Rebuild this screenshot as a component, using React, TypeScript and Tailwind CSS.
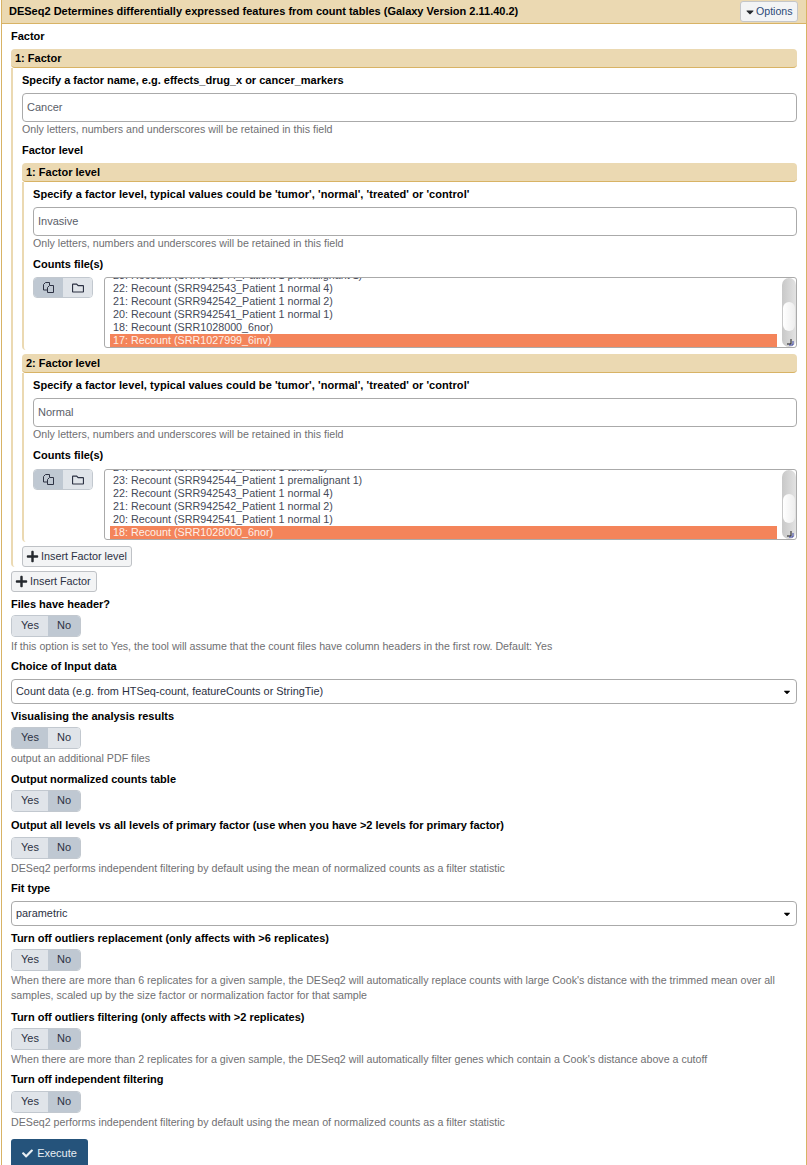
import React from 'react';
import { FaRegFolder, FaPlus, FaCheck, FaCaretDown } from 'react-icons/fa';

const Label = ({ children, className = '' }: { children: React.ReactNode; className?: string }) => (
  <div className={`text-[11px] leading-[14px] font-bold text-black ${className}`}>{children}</div>
);

const Help = ({ children, className = '' }: { children: React.ReactNode; className?: string }) => (
  <div className={`text-[10.65px] leading-[14px] text-[#6f6f72] ${className}`}>{children}</div>
);

const TextBox = ({ value, className = '' }: { value: string; className?: string }) => (
  <div className={`h-[29px] border border-[#aaaaaa] rounded-[4px] pl-[4px] flex items-center text-[11px] text-[#5a5e68] ${className}`}>
    {value}
  </div>
);

const Toggle = ({ active, className = 'mt-[4px]' }: { active: 'Yes' | 'No'; className?: string }) => (
  <div className={`flex w-[70px] h-[22px] border border-[#c2c8cf] rounded-[4px] overflow-hidden text-[11px] text-[#2c3143] ${className}`}>
    <div className={`w-[36px] pb-[1px] flex items-center justify-center ${active === 'Yes' ? 'bg-[#bfc8d2]' : 'bg-[#e0e4e9]'}`}>Yes</div>
    <div className={`flex-1 pb-[1px] flex items-center justify-center ${active === 'No' ? 'bg-[#bfc8d2]' : 'bg-[#e0e4e9]'}`}>No</div>
  </div>
);

const Dropdown = ({ value }: { value: string }) => (
  <div className="h-[25px] mt-[6px] border border-[#aaaaaa] rounded-[4px] pl-[4px] pr-[4px] flex items-center justify-between text-[10.9px] text-[#2c3143]">
    <span>{value}</span>
    <FaCaretDown className="w-[10px] h-[10px] text-black" />
  </div>
);

const AddButton = ({ children, className = '' }: { children: React.ReactNode; className?: string }) => (
  <div className={`h-[21px] border border-[#bfc2c6] rounded-[3px] bg-[#f3f4f5] flex items-center gap-[2px] pl-[3px] text-[10.8px] text-[#2c3143] ${className}`}>
    <FaPlus className="w-[13px] h-[13px] text-[#25292e]" />
    {children}
  </div>
);

const BlockHeader = ({ children }: { children: React.ReactNode }) => (
  <div className="h-[19px] bg-[#ebd9b2] border-b border-[#d8b365] rounded-[4px] pl-[4px] flex items-center text-[11px] font-bold text-black">
    {children}
  </div>
);

const FileList = ({ rows, selected, className = 'mt-[6px]' }: { rows: string[]; selected: string; className?: string }) => (
  <div className={`flex items-start ${className}`}>
    <div className="flex w-[60px] h-[21px] border border-[#c2c8cf] rounded-[4px] overflow-hidden text-[#2c3143]">
      <div className="flex-1 bg-[#bfc8d2] flex items-center justify-center">
        <svg width="11" height="11" viewBox="0 0 11 11" fill="none" stroke="currentColor" strokeWidth="1">
          <path d="M2.5.5H6.5V3M2.5.5L.5 2.5V8H4" />
          <path d="M6.5 3.5h4v7h-6V5.5z" />
        </svg>
      </div>
      <div className="flex-1 bg-[#e0e4e9] flex items-center justify-center">
        <FaRegFolder className="w-[12px] h-[12px]" />
      </div>
    </div>
    <div className="relative flex-1 ml-[11px] h-[71px] border border-[#aaaaaa] rounded-[3px] overflow-hidden pl-[5px] pr-[19px] flex flex-col justify-end text-[10.75px] leading-[13px] text-[#454a58]">
      {rows.map((r) => (
        <div key={r} className="h-[13px] shrink-0 pl-[3px] whitespace-nowrap">{r}</div>
      ))}
      <div className="h-[13px] shrink-0 pl-[3px] bg-[#f4845a] text-[#fdf0e8] whitespace-nowrap">{selected}</div>
      {/* scrollbar + resize corner */}
      <div className="absolute right-0 top-0 bottom-0 w-[14px] rounded-full bg-gradient-to-r from-[#c8c8c8] to-[#e2e2e2] flex flex-col items-center pt-[24px]">
        <div className="w-[12px] h-[29px] rounded-full bg-gradient-to-r from-[#ffffff] to-[#eeeeee]" />
      </div>
      <svg className="absolute right-[2px] bottom-[1px]" width="8" height="8" viewBox="0 0 8 8">
        <path d="M5 1v5H1" fill="none" stroke="#1b1b1b" strokeWidth="1" />
        <path d="M7 3v4H3" fill="none" stroke="#3940a0" strokeWidth="1" />
      </svg>
    </div>
  </div>
);

const FactorLevel = ({ title, value, rows, selected, className = '', listClass }: { title: string; value: string; rows: string[]; selected: string; className?: string; listClass?: string }) => (
  <div className={className}>
    <BlockHeader>{title}</BlockHeader>
    <div className="border-l-2 border-[#ebd9b2] rounded-bl-[4px] pl-[9px] pt-[5px] pb-[2px]">
      <Label className="tracking-[0.06px]">Specify a factor level, typical values could be 'tumor', 'normal', 'treated' or 'control'</Label>
      <TextBox value={value} className="mt-[6px]" />
      <Help>Only letters, numbers and underscores will be retained in this field</Help>
      <Label className="mt-[7px]">Counts file(s)</Label>
      <FileList rows={rows} selected={selected} className={listClass} />
    </div>
  </div>
);

export default function App() {
  return (
    <div className="w-[807px] h-[1165px] overflow-hidden pl-[1px] font-['Liberation_Sans',Arial,sans-serif]">
      <div className="w-[806px] h-full border-x border-[#d8b365]">
        {/* Title bar */}
        <div className="h-[24px] bg-[#ebd9b2] border-b border-[#d8b365] pl-[7px] pr-[8px] flex items-center justify-between">
          <span className="text-[11px] font-bold text-black whitespace-nowrap">
            DESeq2 Determines differentially expressed features from count tables (Galaxy Version 2.11.40.2)
          </span>
          <div className="h-[21px] w-[58px] border border-[#c4c6c9] rounded-[3px] bg-[#f3f4f5] flex items-center pl-[3px] text-[10.6px] text-[#2c4a78]">
            <FaCaretDown className="w-[12px] h-[12px] text-[#25292e]" />
            Options
          </div>
        </div>

        <div className="pl-[9px] pr-[9px] pt-[5px]">
          <Label>Factor</Label>
          <div className="mt-[6px]">
            <BlockHeader>1: Factor</BlockHeader>
            <div className="border-l-2 border-[#ebd9b2] rounded-bl-[4px] pl-[9px] pt-[5px]">
              <Label>Specify a factor name, e.g. effects_drug_x or cancer_markers</Label>
              <TextBox value="Cancer" className="mt-[6px]" />
              <Help>Only letters, numbers and underscores will be retained in this field</Help>
              <Label className="mt-[7px]">Factor level</Label>
              <div className="mt-[6px]">
                <FactorLevel
                  title="1: Factor level"
                  value="Invasive"
                  rows={[
                    '23: Recount (SRR942544_Patient 1 premalignant 1)',
                    '22: Recount (SRR942543_Patient 1 normal 4)',
                    '21: Recount (SRR942542_Patient 1 normal 2)',
                    '20: Recount (SRR942541_Patient 1 normal 1)',
                    '18: Recount (SRR1028000_6nor)',
                  ]}
                  selected="17: Recount (SRR1027999_6inv)"
                />
                <FactorLevel
                  className="mt-[4px]"
                  listClass="mt-[7px]"
                  title="2: Factor level"
                  value="Normal"
                  rows={[
                    '24: Recount (SRR942545_Patient 1 tumor 1)',
                    '23: Recount (SRR942544_Patient 1 premalignant 1)',
                    '22: Recount (SRR942543_Patient 1 normal 4)',
                    '21: Recount (SRR942542_Patient 1 normal 2)',
                    '20: Recount (SRR942541_Patient 1 normal 1)',
                  ]}
                  selected="18: Recount (SRR1028000_6nor)"
                />
              </div>
              <AddButton className="w-[110px] mt-[4px]">Insert Factor level</AddButton>
            </div>
          </div>
          <AddButton className="w-[86px] mt-[4px]">Insert Factor</AddButton>

          <Label className="mt-[5px]">Files have header?</Label>
          <Toggle active="No" />
          <Help className="mt-[2px]">If this option is set to Yes, the tool will assume that the count files have column headers in the first row. Default: Yes</Help>

          <Label className="mt-[6px]">Choice of Input data</Label>
          <Dropdown value="Count data (e.g. from HTSeq-count, featureCounts or StringTie)" />

          <Label className="mt-[5px]">Visualising the analysis results</Label>
          <Toggle active="Yes" />
          <Help className="mt-[2px]">output an additional PDF files</Help>

          <Label className="mt-[7px]">Output normalized counts table</Label>
          <Toggle active="No" />

          <Label className="mt-[6px] tracking-[-0.02px]">Output all levels vs all levels of primary factor (use when you have &gt;2 levels for primary factor)</Label>
          <Toggle active="No" className="mt-[5px]" />
          <Help className="mt-[2px]">DESeq2 performs independent filtering by default using the mean of normalized counts as a filter statistic</Help>

          <Label className="mt-[6px]">Fit type</Label>
          <Dropdown value="parametric" />

          <Label className="mt-[5px]">Turn off outliers replacement (only affects with &gt;6 replicates)</Label>
          <Toggle active="No" />
          <Help className="mt-[2px] leading-[15px]">
            When there are more than 6 replicates for a given sample, the DESeq2 will automatically replace counts with large Cook's distance with the trimmed mean over all samples, scaled up by the size factor or normalization factor for that sample
          </Help>

          <Label className="mt-[7px]">Turn off outliers filtering (only affects with &gt;2 replicates)</Label>
          <Toggle active="No" />
          <Help className="mt-[2px]">When there are more than 2 replicates for a given sample, the DESeq2 will automatically filter genes which contain a Cook's distance above a cutoff</Help>

          <Label className="mt-[6px]">Turn off independent filtering</Label>
          <Toggle active="No" className="mt-[5px]" />
          <Help className="mt-[2px]">DESeq2 performs independent filtering by default using the mean of normalized counts as a filter statistic</Help>

          <div className="mt-[10px] h-[28px] w-[77px] bg-[#25537b] rounded-t-[3px] flex items-center justify-center gap-[4px] text-[11px] text-[#e8eef3]">
            <FaCheck className="w-[11px] h-[11px]" />
            Execute
          </div>
        </div>
      </div>
    </div>
  );
}
